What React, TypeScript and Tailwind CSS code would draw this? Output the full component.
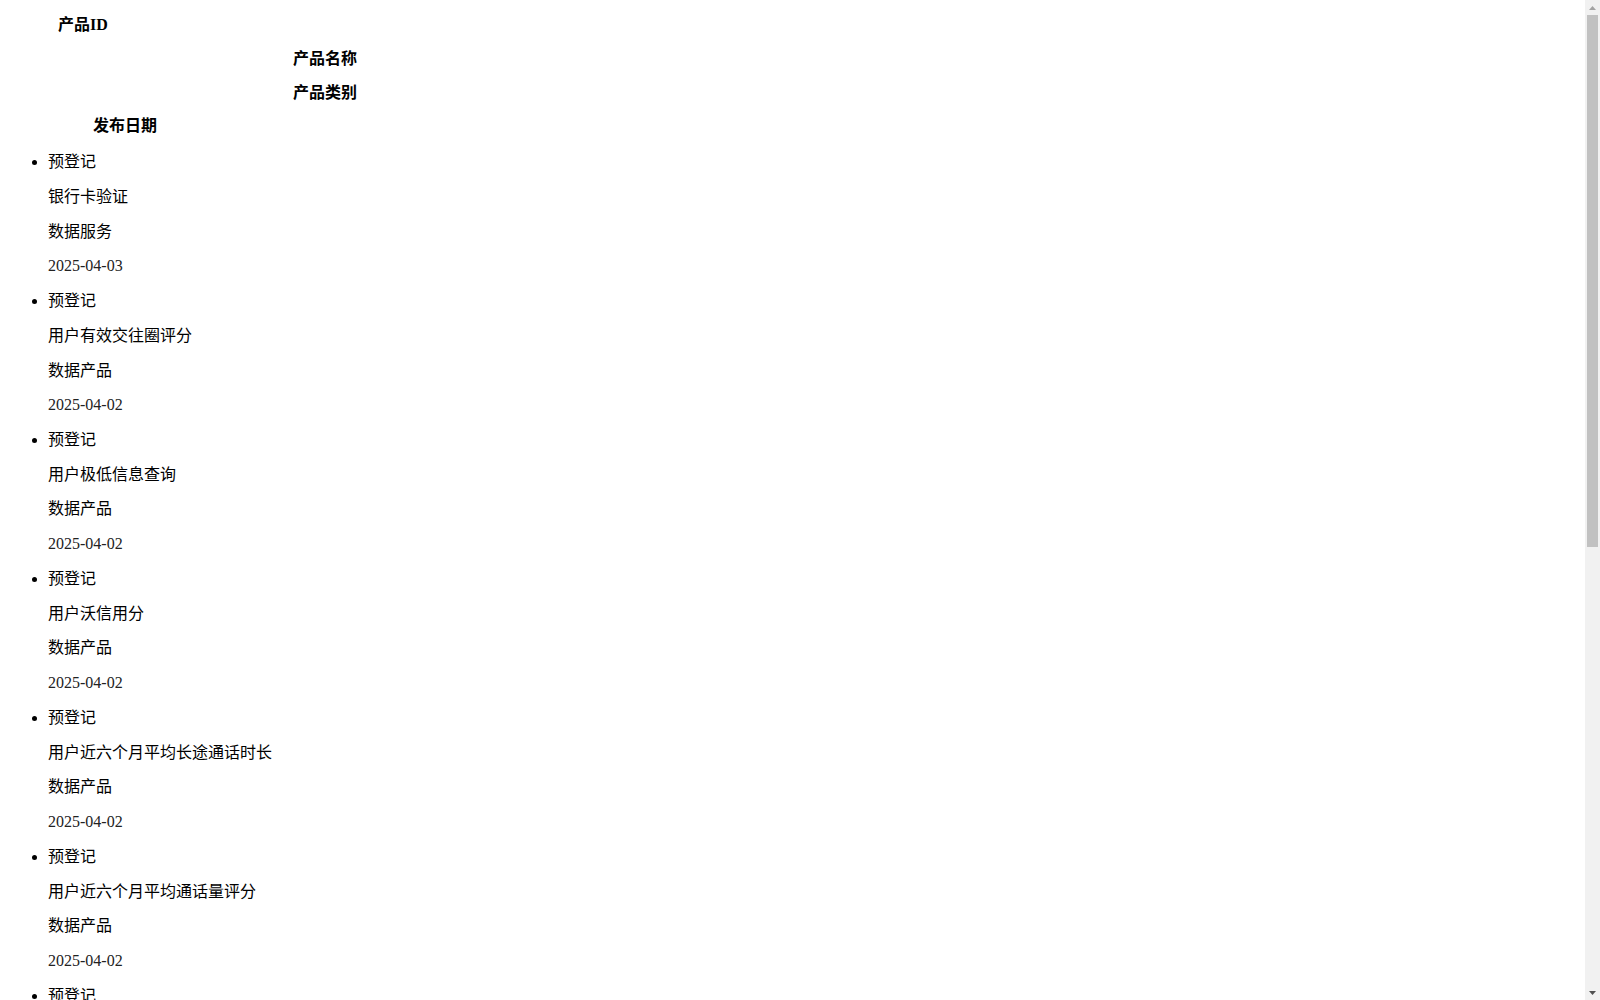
const items: [string, string, string][] = [
  ["银行卡验证", "数据服务", "2025-04-03"],
  ["用户有效交往圈评分", "数据产品", "2025-04-02"],
  ["用户极低信息查询", "数据产品", "2025-04-02"],
  ["用户沃信用分", "数据产品", "2025-04-02"],
  ["用户近六个月平均长途通话时长", "数据产品", "2025-04-02"],
  ["用户近六个月平均通话量评分", "数据产品", "2025-04-02"],
  ["用户近三个月平均流量评分", "数据产品", "2025-04-02"],
  ["用户在网时长查询", "数据产品", "2025-04-01"],
  ["用户在网状态查询", "数据产品", "2025-04-01"],
  ["手机号三要素验证", "数据服务", "2025-04-01"],
  ["手机号二要素验证", "数据服务", "2025-04-01"],
  ["用户常驻地验证", "数据产品", "2025-03-31"],
];

export default function App() {
  const font = { fontFamily: '"Liberation Serif", "Noto Sans CJK SC", serif' };
  return (
    <div className="flex h-[1000px] w-[1600px] overflow-hidden bg-white text-black text-[16px]" style={font}>
      <div className="flex-1 overflow-hidden">
        <div className="pt-[8.67px] font-bold whitespace-nowrap">
          <div className="h-[33.67px] flex items-center pl-[58px]">产品ID</div>
          <div className="h-[33.67px] flex items-center pl-[293px]">产品名称</div>
          <div className="h-[33.67px] flex items-center pl-[293px]">产品类别</div>
          <div className="h-[33.67px] flex items-center pl-[93px]">发布日期</div>
        </div>
        <ul className="list-disc pl-[48px] mt-[1.5px]">
          {items.map(([name, cat, date], i) => (
            <li key={i}>
              <div className="h-[34.74px] flex items-center">预登记</div>
              <div className="h-[34.74px] flex items-center">{name}</div>
              <div className="h-[34.74px] flex items-center">{cat}</div>
              <div className="h-[34.74px] flex items-center text-[#222]">{date}</div>
            </li>
          ))}
        </ul>
      </div>
      <div className="w-[15px] flex flex-col bg-[#f1f1f1]">
        <div className="h-[15px] flex items-center justify-center">
          <svg width="7" height="4" viewBox="0 0 7 4">
            <polygon points="3.5,0 7,4 0,4" fill="#a3a3a3" />
          </svg>
        </div>
        <div className="flex-1 px-[2px]">
          <div className="h-[532px] bg-[#c1c1c1]" />
        </div>
        <div className="h-[15px] flex items-center justify-center">
          <svg width="7" height="4" viewBox="0 0 7 4">
            <polygon points="0,0 7,0 3.5,4" fill="#505050" />
          </svg>
        </div>
      </div>
    </div>
  );
}
